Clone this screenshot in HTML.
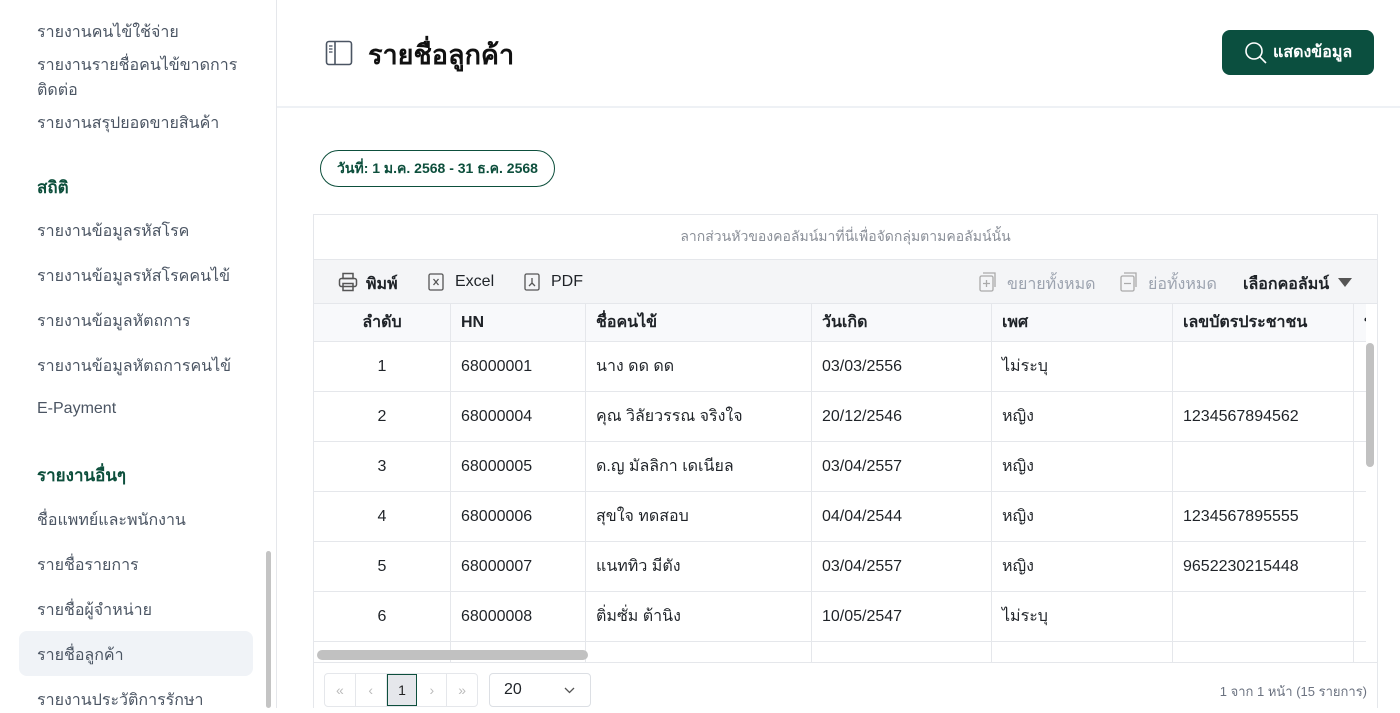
<!DOCTYPE html>
<html><head><meta charset="utf-8"><style>
*{box-sizing:border-box;margin:0;padding:0}
body{width:1400px;height:708px;overflow:hidden;background:#fff;font-family:"Liberation Sans","Noto Sans CJK SC",sans-serif;color:#1f2328;position:relative}
.abs{position:absolute}
.side{left:0;top:0;width:277px;height:708px;border-right:1px solid #e5e7eb;background:#fff}
.side .it{position:absolute;left:37px;font-size:16px;color:#4b5563;white-space:nowrap}
.side .hd{position:absolute;left:37px;font-size:17px;font-weight:bold;color:#0d4f3c}
.hdr{left:277px;top:0;right:0;height:108px;border-bottom:2px solid #eef1f5}
.grid{left:313px;top:214px;width:1065px;height:494px;border:1px solid #e5e7eb;border-bottom:none;overflow:hidden}
.row{position:absolute;left:0;width:1052px;height:50px;border-bottom:1px solid #e5e7eb;font-size:16px}
.c{position:absolute;top:0;height:100%;border-right:1px solid #e5e7eb;display:flex;align-items:center;padding-left:10px;white-space:nowrap}
</style></head><body>
<div class="abs side">
<div class="it" style="top:20px">รายงานคนไข้ใช้จ่าย</div>
<div class="it" style="top:53px">รายงานรายชื่อคนไข้ขาดการ</div>
<div class="it" style="top:78px">ติดต่อ</div>
<div class="it" style="top:111px">รายงานสรุปยอดขายสินค้า</div>
<div class="hd" style="top:174px">สถิติ</div>
<div class="it" style="top:219px">รายงานข้อมูลรหัสโรค</div>
<div class="it" style="top:264px">รายงานข้อมูลรหัสโรคคนไข้</div>
<div class="it" style="top:309px">รายงานข้อมูลหัตถการ</div>
<div class="it" style="top:354px">รายงานข้อมูลหัตถการคนไข้</div>
<div class="it" style="top:400px">E-Payment</div>
<div class="hd" style="top:462px">รายงานอื่นๆ</div>
<div class="it" style="top:508px">ชื่อแพทย์และพนักงาน</div>
<div class="it" style="top:553px">รายชื่อรายการ</div>
<div class="it" style="top:598px">รายชื่อผู้จำหน่าย</div>
<div class="abs" style="left:19px;top:631px;width:234px;height:45px;background:#f0f3f7;border-radius:8px"></div>
<div class="it" style="top:643px">รายชื่อลูกค้า</div>
<div class="it" style="top:688px">รายงานประวัติการรักษา</div>
<div class="abs" style="left:266px;top:551px;width:5px;height:157px;background:#c4c4c4;border-radius:3px"></div>
</div>
<div class="abs hdr"></div>
<svg class="abs" style="left:325px;top:40px" width="28" height="26" viewBox="0 0 28 26"><rect x="1.5" y="1.5" width="25" height="23" rx="2.5" fill="none" stroke="#4b5563" stroke-width="1.6"/><line x1="10" y1="2" x2="10" y2="24" stroke="#4b5563" stroke-width="1.6"/><line x1="4" y1="6" x2="7.5" y2="6" stroke="#4b5563" stroke-width="1.3"/><line x1="4" y1="9" x2="7.5" y2="9" stroke="#4b5563" stroke-width="1.3"/><line x1="4" y1="12" x2="7.5" y2="12" stroke="#4b5563" stroke-width="1.3"/></svg>
<div class="abs" style="left:368px;top:33px;font-size:27px;font-weight:bold;color:#111">รายชื่อลูกค้า</div>
<div class="abs" style="left:1222px;top:30px;width:152px;height:45px;background:#0b4f3f;border-radius:8px;color:#fff;font-size:16px;font-weight:bold;display:flex;align-items:center;padding-left:22px">
<svg width="24" height="24" viewBox="0 0 24 24" style="margin-right:5px"><circle cx="10" cy="10" r="8" fill="none" stroke="#fff" stroke-width="1.6"/><line x1="15.8" y1="15.8" x2="22" y2="22" stroke="#fff" stroke-width="1.6"/></svg>แสดงข้อมูล</div>
<div class="abs" style="left:320px;top:150px;width:235px;height:37px;border:1.5px solid #0d4f3c;border-radius:19px;font-size:14px;font-weight:bold;color:#0d4f3c;display:flex;align-items:center;justify-content:center">วันที่: 1 ม.ค. 2568 - 31 ธ.ค. 2568</div>
<div class="abs grid">
<div class="abs" style="left:0;top:0;width:100%;height:45px;display:flex;align-items:center;justify-content:center;font-size:14px;color:#8a8f98;border-bottom:1px solid #e5e7eb">ลากส่วนหัวของคอลัมน์มาที่นี่เพื่อจัดกลุ่มตามคอลัมน์นั้น</div>
<div class="abs" style="left:0;top:45px;width:100%;height:44px;background:#f4f5f7;border-bottom:1px solid #e5e7eb;font-size:16px">
<svg class="abs" style="left:24px;top:12px" width="20" height="20" viewBox="0 0 20 20" fill="none" stroke="#555" stroke-width="1.5"><rect x="5" y="1.5" width="10" height="5"/><rect x="1.5" y="6.5" width="17" height="8" rx="2"/><rect x="5" y="11.5" width="10" height="7"/></svg>
<span class="abs" style="left:52px;top:12px;font-weight:bold">พิมพ์</span>
<svg class="abs" style="left:114px;top:13px" width="16" height="18" viewBox="0 0 16 18" fill="none" stroke="#555" stroke-width="1.3"><rect x="1" y="1" width="14" height="16" rx="1.5"/><path d="M5.5 6l5 6M10.5 6l-5 6"/></svg>
<span class="abs" style="left:141px;top:13px">Excel</span>
<svg class="abs" style="left:210px;top:13px" width="16" height="18" viewBox="0 0 16 18" fill="none" stroke="#555" stroke-width="1.3"><rect x="1" y="1" width="14" height="16" rx="1.5"/><path d="M8 5v5l-3 3M8 10l3 3"/></svg>
<span class="abs" style="left:237px;top:13px">PDF</span>
<svg class="abs" style="left:665px;top:12px" width="18" height="20" viewBox="0 0 18 20" fill="none" stroke="#aaa" stroke-width="1.3"><rect x="1" y="4" width="13" height="15" rx="1.5"/><path d="M4 1h12v14M7.5 8v7M4 11.5h7"/></svg>
<span class="abs" style="left:693px;top:12px;color:#9ca3af">ขยายทั้งหมด</span>
<svg class="abs" style="left:806px;top:12px" width="18" height="20" viewBox="0 0 18 20" fill="none" stroke="#aaa" stroke-width="1.3"><rect x="1" y="4" width="13" height="15" rx="1.5"/><path d="M4 1h12v14M4 11.5h7"/></svg>
<span class="abs" style="left:834px;top:12px;color:#9ca3af">ย่อทั้งหมด</span>
<span class="abs" style="left:929px;top:12px;font-weight:bold">เลือกคอลัมน์</span>
<svg class="abs" style="left:1024px;top:18px" width="14" height="9" viewBox="0 0 14 9"><path d="M0 0h14L7 9z" fill="#555"/></svg>
</div>
<div class="row" style="top:89px;height:38px;background:#f8f9fb;font-weight:bold">
<div class="c" style="left:0;width:137px;justify-content:center;padding:0">ลำดับ</div>
<div class="c" style="left:137px;width:135px">HN</div>
<div class="c" style="left:272px;width:226px">ชื่อคนไข้</div>
<div class="c" style="left:498px;width:180px">วันเกิด</div>
<div class="c" style="left:678px;width:181px">เพศ</div>
<div class="c" style="left:859px;width:181px">เลขบัตรประชาชน</div>
<div class="c" style="left:1040px;width:12px;border:none;overflow:hidden">ห</div>
</div>
<div class="row" style="top:127px"><div class="c" style="left:0;width:137px;justify-content:center;padding:0">1</div><div class="c" style="left:137px;width:135px">68000001</div><div class="c" style="left:272px;width:226px">นาง ดด ดด</div><div class="c" style="left:498px;width:180px">03/03/2556</div><div class="c" style="left:678px;width:181px">ไม่ระบุ</div><div class="c" style="left:859px;width:181px"></div></div>
<div class="row" style="top:177px"><div class="c" style="left:0;width:137px;justify-content:center;padding:0">2</div><div class="c" style="left:137px;width:135px">68000004</div><div class="c" style="left:272px;width:226px">คุณ วิลัยวรรณ จริงใจ</div><div class="c" style="left:498px;width:180px">20/12/2546</div><div class="c" style="left:678px;width:181px">หญิง</div><div class="c" style="left:859px;width:181px">1234567894562</div></div>
<div class="row" style="top:227px"><div class="c" style="left:0;width:137px;justify-content:center;padding:0">3</div><div class="c" style="left:137px;width:135px">68000005</div><div class="c" style="left:272px;width:226px">ด.ญ มัลลิกา เดเนียล</div><div class="c" style="left:498px;width:180px">03/04/2557</div><div class="c" style="left:678px;width:181px">หญิง</div><div class="c" style="left:859px;width:181px"></div></div>
<div class="row" style="top:277px"><div class="c" style="left:0;width:137px;justify-content:center;padding:0">4</div><div class="c" style="left:137px;width:135px">68000006</div><div class="c" style="left:272px;width:226px">สุขใจ ทดสอบ</div><div class="c" style="left:498px;width:180px">04/04/2544</div><div class="c" style="left:678px;width:181px">หญิง</div><div class="c" style="left:859px;width:181px">1234567895555</div></div>
<div class="row" style="top:327px"><div class="c" style="left:0;width:137px;justify-content:center;padding:0">5</div><div class="c" style="left:137px;width:135px">68000007</div><div class="c" style="left:272px;width:226px">แนททิว มีตัง</div><div class="c" style="left:498px;width:180px">03/04/2557</div><div class="c" style="left:678px;width:181px">หญิง</div><div class="c" style="left:859px;width:181px">9652230215448</div></div>
<div class="row" style="top:377px"><div class="c" style="left:0;width:137px;justify-content:center;padding:0">6</div><div class="c" style="left:137px;width:135px">68000008</div><div class="c" style="left:272px;width:226px">ติ่มซั่ม ต้านิง</div><div class="c" style="left:498px;width:180px">10/05/2547</div><div class="c" style="left:678px;width:181px">ไม่ระบุ</div><div class="c" style="left:859px;width:181px"></div></div>
<div class="row" style="top:427px;border:none;height:20px"><div class="c" style="left:0;width:137px"></div><div class="c" style="left:137px;width:135px"></div><div class="c" style="left:272px;width:226px"></div><div class="c" style="left:498px;width:180px"></div><div class="c" style="left:678px;width:181px"></div><div class="c" style="left:859px;width:181px"></div></div>
<div class="abs" style="left:3px;top:435px;width:271px;height:10px;background:#c1c1c1;border-radius:5px"></div>
<div class="abs" style="left:1052px;top:128px;width:8px;height:124px;background:#c1c1c1;border-radius:4px"></div>
<div class="abs" style="left:0;top:447px;width:100%;height:1px;background:#e5e7eb"></div>
<div class="abs" style="left:10px;top:458px;width:154px;height:34px;border:1px solid #e5e7eb;border-radius:4px;display:flex;font-size:14px;color:#bbb">
<div style="width:31px;display:flex;align-items:center;justify-content:center;border-right:1px solid #e5e7eb">«</div>
<div style="width:31px;display:flex;align-items:center;justify-content:center;border-right:1px solid #e5e7eb">‹</div>
<div style="width:31px;display:flex;align-items:center;justify-content:center;background:#e5e7eb;border:1px solid #0d4f3c;color:#222">1</div>
<div style="width:30px;display:flex;align-items:center;justify-content:center;border-right:1px solid #e5e7eb">›</div>
<div style="width:30px;display:flex;align-items:center;justify-content:center">»</div>
</div>
<div class="abs" style="left:175px;top:458px;width:102px;height:34px;border:1px solid #dcdfe4;border-radius:4px;font-size:16px;display:flex;align-items:center;padding-left:14px">20
<svg class="abs" style="left:74px;top:13px" width="11" height="7" viewBox="0 0 11 7"><path d="M1 1l4.5 4.5L10 1" fill="none" stroke="#555" stroke-width="1.3"/></svg></div>
<div class="abs" style="right:10px;top:466px;font-size:13px;color:#6b7280">1 จาก 1 หน้า (15 รายการ)</div>
</div>
</body></html>
